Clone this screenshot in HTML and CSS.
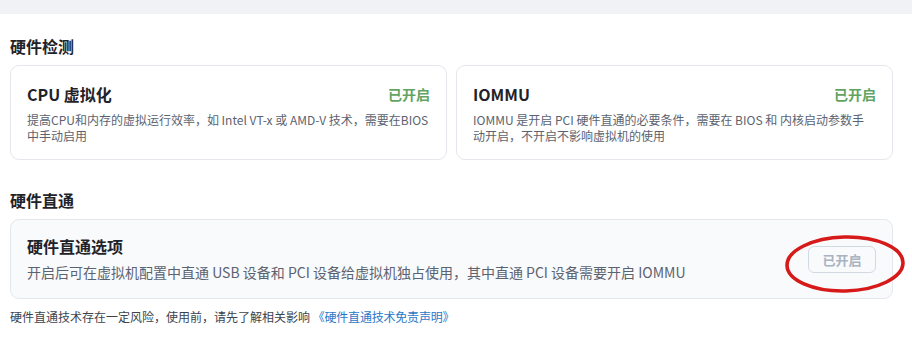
FILE: index.html
```html
<!DOCTYPE html>
<html lang="zh-CN">
<head>
    <meta charset="UTF-8">
    <meta name="viewport" content="width=device-width, initial-scale=1.0">
    <title>硬件设置</title>
    <link rel="stylesheet" href="styles.css">
</head>
<body>
    <div class="topbar"></div>
    <div class="container">
        <h2 class="section-title first">硬件检测</h2>
        <div class="check-grid">
            <div class="card">
                <div class="card-head">
                    <span class="card-title">CPU 虚拟化</span>
                    <span class="status-on">已开启</span>
                </div>
                <p class="card-desc">提高CPU和内存的虚拟运行效率，如 Intel VT-x 或 AMD-V 技术，需要在BIOS中手动启用</p>
            </div>
            <div class="card">
                <div class="card-head">
                    <span class="card-title">IOMMU</span>
                    <span class="status-on">已开启</span>
                </div>
                <p class="card-desc">IOMMU 是开启 PCI 硬件直通的必要条件，需要在 BIOS 和 内核启动参数手动开启，不开启不影响虚拟机的使用</p>
            </div>
        </div>

        <h2 class="section-title">硬件直通</h2>
        <div class="card option-card">
            <div class="option-text">
                <div class="option-title">硬件直通选项</div>
                <p class="option-desc">开启后可在虚拟机配置中直通 USB 设备和 PCI 设备给虚拟机独占使用，其中直通 PCI 设备需要开启 IOMMU</p>
            </div>
            <div class="btn-wrap">
                <button class="btn-enabled" disabled>已开启</button>
                <!-- 标注圈 -->
                <svg class="mark" width="124" height="62" viewBox="0 0 124 62">
                    <ellipse cx="62" cy="31" rx="58" ry="27" fill="none" stroke="#d61a1a" stroke-width="3.6" transform="rotate(-1.5 62 31)"/>
                </svg>
            </div>
        </div>
        <p class="notice">硬件直通技术存在一定风险，使用前，请先了解相关影响 <a href="#">《硬件直通技术免责声明》</a></p>
    </div>
</body>
</html>
```

FILE: styles.css
```css
body {
    margin: 0;
    font-family: "Noto Sans CJK SC", "Noto Sans", sans-serif;
    color: #1f2329;
    background: #fff;
}
.topbar {
    height: 14px;
    background: #f0f2f6;
}
.container {
    padding: 0 19px 0 10px;
}
.section-title {
    margin: 29px 0 8px;
    font-size: 16px;
    line-height: 22px;
    font-weight: 700;
    color: #1f2329;
}
.section-title.first {
    margin-top: 21px;
}
.check-grid {
    display: grid;
    grid-template-columns: 1fr 1fr;
    gap: 9px;
}
.card {
    border: 1px solid #e4e7ec;
    border-radius: 9px;
    padding: 16px 17px 15px 16px;
    background: #fff;
}
.card-head {
    display: flex;
    justify-content: space-between;
    align-items: center;
    height: 24px;
    margin-right: -1px;
}
.card-title {
    font-size: 16px;
    font-weight: 600;
}
.status-on {
    color: #61a461;
    font-size: 14px;
    font-weight: 700;
}
.card-desc {
    margin: 6px 0 0;
    font-size: 12px;
    line-height: 16px;
    color: #5c6370;
}
.option-card {
    display: flex;
    align-items: center;
    justify-content: space-between;
    padding: 14px 16px 16px;
    background: #f9fafc;
}
.option-title {
    font-size: 16px;
    line-height: 24px;
    font-weight: 700;
}
.option-desc {
    margin: 4px 0 0;
    font-size: 14px;
    line-height: 20px;
    color: #5c6370;
}
.btn-wrap {
    position: relative;
    margin-top: 2px;
}
.btn-enabled {
    width: 68px;
    height: 27px;
    border: 1px solid #d3d9e2;
    border-radius: 6px;
    background: #f9fafc;
    color: #a9b3c1;
    font-family: inherit;
    font-size: 13px;
    font-weight: 700;
    cursor: not-allowed;
}
.mark {
    position: absolute;
    left: -25px;
    top: -13px;
    pointer-events: none;
}
.notice {
    margin: 9px 0 0;
    font-size: 12px;
    line-height: 18px;
    color: #3d434c;
}
.notice a {
    color: #2a78c8;
    text-decoration: none;
    letter-spacing: -0.2px;
}
```
